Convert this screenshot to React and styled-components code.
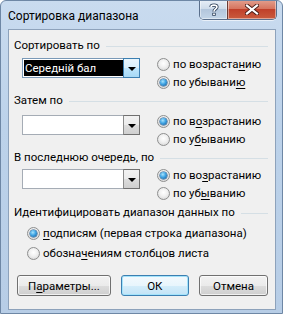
import styled, { createGlobalStyle } from "styled-components";

const GlobalStyle = createGlobalStyle`
  html, body {
    margin: 0;
    padding: 0;
    background: #fff;
  }
  * {
    box-sizing: border-box;
  }
`;

const Window = styled.div`
  width: 283px;
  height: 314px;
  display: flex;
  flex-direction: column;
  background: linear-gradient(180deg, #c9dbef 0%, #bcd2ea 40%, #b7cde6 100%);
  border: 1px solid #6e87a5;
  border-radius: 6px 6px 0 0;
  font-family: Roboto, "Noto Sans", sans-serif;
  font-size: 11.5px;
  color: #000;
  overflow: hidden;
`;

const TitleBar = styled.div`
  height: 28px;
  display: flex;
  align-items: flex-start;
  flex-shrink: 0;
`;

const Title = styled.div`
  padding: 7px 0 0 7px;
  line-height: 16px;
  font-size: 12px;
  color: #000;
`;

const CaptionButtons = styled.div`
  margin-left: auto;
  margin-right: 5px;
  margin-top: -1px;
  display: flex;
  border: 1px solid #5a6f8c;
  border-top: none;
  border-radius: 0 0 5px 5px;
  overflow: hidden;
  box-shadow: 0 1px 0 rgba(255, 255, 255, 0.6);
`;

const CaptionButton = styled.div`
  width: ${({ wide }) => (wide ? "49px" : "27px")};
  height: 19px;
  display: flex;
  align-items: center;
  justify-content: center;
  border-left: ${({ wide }) => (wide ? "1px solid #6b3a33" : "none")};
  background: ${({ wide }) =>
    wide
      ? "linear-gradient(180deg, #e3a08f 0%, #d7755f 45%, #c0402a 50%, #c95b3e 100%)"
      : "linear-gradient(180deg, #e8eff7 0%, #cfdcea 45%, #b3c6dc 50%, #c3d5e8 100%)"};
  box-shadow: inset 0 0 0 1px rgba(255, 255, 255, 0.45);
`;

const Client = styled.div`
  flex: 1;
  margin: 0 6px 3px 7px;
  background: #f0f0f0;
  border: 1px solid #8da2bb;
  padding: 8px 7px 0 5px;
  display: flex;
  flex-direction: column;
`;

const GroupLabel = styled.div`
  display: flex;
  align-items: center;
  gap: 6px;
  height: 15px;
  line-height: 15px;
  white-space: nowrap;

  &::after {
    content: "";
    flex: 1;
    height: 1px;
    margin-top: 1px;
    background: #d5dfe5;
  }
`;

const SortRow = styled.div`
  display: flex;
  align-items: flex-start;
  margin-top: ${({ gap }) => gap}px;
  margin-bottom: ${({ after }) => after}px;
  padding-left: 8px;
`;

const Combo = styled.div`
  width: 118px;
  height: 20px;
  margin-top: 3px;
  border: 1px solid ${({ active }) => (active ? "#7a99b7" : "#a5acb5")};
  background: #fff;
  display: flex;
  padding: 1px;
`;

const ComboValue = styled.div`
  flex: 1;
  background: ${({ selected }) => (selected ? "#000" : "#fff")};
  color: #fff;
  line-height: 16px;
  padding-left: 1px;
  white-space: nowrap;
`;

const ComboArrow = styled.div`
  width: 17px;
  display: flex;
  align-items: center;
  justify-content: center;
  border: 1px solid ${({ active }) => (active ? "#3c7fb1" : "#707070")};
  border-left-color: ${({ active }) => (active ? "#3c7fb1" : "#8c8c8c")};
  background: ${({ active }) =>
    active
      ? "linear-gradient(180deg, #eaf6fd 0%, #d9f0fc 50%, #bee6fd 51%, #a7d9f5 100%)"
      : "linear-gradient(180deg, #f2f2f2 0%, #ebebeb 50%, #dddddd 51%, #cfcfcf 100%)"};
  margin: -2px -2px -2px 0;

  &::before {
    content: "";
    border-left: 4px solid transparent;
    border-right: 4px solid transparent;
    border-top: 4px solid #000;
    margin-top: 1px;
  }
`;

const RadioList = styled.div`
  display: flex;
  flex-direction: column;
  margin-left: ${({ indent }) => indent}px;
`;

const RadioItem = styled.div`
  display: flex;
  align-items: center;
  gap: 3px;
  height: ${({ h }) => h || 18}px;
  white-space: nowrap;
`;

const RadioDot = styled.span`
  width: 13px;
  height: 13px;
  border-radius: 50%;
  border: 1px solid #8e8f8f;
  background: radial-gradient(circle at 50% 40%, #ffffff 0%, #f0f0f0 45%, #cfcfcf 100%);
  display: flex;
  align-items: center;
  justify-content: center;
  flex-shrink: 0;

  &::after {
    content: "";
    display: ${({ checked }) => (checked ? "block" : "none")};
    width: 7px;
    height: 7px;
    border-radius: 50%;
    background: radial-gradient(circle at 40% 35%, #a9e4fd 0%, #3fa4e4 45%, #14538f 100%);
    box-shadow: 0 0 0 0.5px #1b4f7f;
  }
`;

const Key = styled.span`
  text-decoration: underline;
  text-underline-offset: 2px;
`;

const Buttons = styled.div`
  display: flex;
  gap: 10px;
  margin-top: 12px;
  padding-left: 3px;
`;

const Button = styled.div`
  width: ${({ w }) => w}px;
  height: 21px;
  border: 1px solid ${({ primary }) => (primary ? "#3c7fb1" : "#707070")};
  border-radius: 3px;
  display: flex;
  align-items: center;
  justify-content: center;
  line-height: 16px;
  background: ${({ primary }) =>
    primary
      ? "linear-gradient(180deg, #f3f9fd 0%, #e8f5fc 50%, #d4edfa 51%, #c2e3f6 100%)"
      : "linear-gradient(180deg, #f2f2f2 0%, #ebebeb 50%, #dddddd 51%, #cfcfcf 100%)"};
  box-shadow: inset 0 0 0 1px ${({ primary }) => (primary ? "#a3e3fb" : "rgba(255,255,255,0.7)")};
`;

const Help = () => (
  <svg width="10" height="13" viewBox="0 0 10 13">
    <path
      d="M2 4 C2 1.5 8 1.5 8 4 C8 6 5 6 5 8.5"
      fill="none"
      stroke="#2c3e57"
      strokeWidth="3.2"
    />
    <path
      d="M2 4 C2 1.5 8 1.5 8 4 C8 6 5 6 5 8.5"
      fill="none"
      stroke="#fff"
      strokeWidth="1.6"
    />
    <rect x="3.3" y="9.8" width="3.4" height="3" fill="#2c3e57" />
    <rect x="4.1" y="10.5" width="1.8" height="1.6" fill="#fff" />
  </svg>
);

const Close = () => (
  <svg width="14" height="11" viewBox="0 0 14 11">
    <path d="M2 1.5 L12 9.5 M12 1.5 L2 9.5" stroke="#4a1d17" strokeWidth="4" strokeLinecap="square" />
    <path d="M2 1.5 L12 9.5 M12 1.5 L2 9.5" stroke="#fff" strokeWidth="2.2" strokeLinecap="square" />
  </svg>
);

const Radio = ({ checked, h, children }) => (
  <RadioItem h={h}>
    <RadioDot checked={checked} />
    <span>{children}</span>
  </RadioItem>
);

const App = () => (
  <>
    <GlobalStyle />
    <Window>
      <TitleBar>
        <Title>Сортировка диапазона</Title>
        <CaptionButtons>
          <CaptionButton>
            <Help />
          </CaptionButton>
          <CaptionButton wide>
            <Close />
          </CaptionButton>
        </CaptionButtons>
      </TitleBar>
      <Client>
        <GroupLabel>Сортировать по</GroupLabel>
        <SortRow gap={2} after={2}>
          <Combo active>
            <ComboValue selected>Середній бал</ComboValue>
            <ComboArrow active />
          </Combo>
          <RadioList indent={17}>
            <Radio>
              по возраста<Key>н</Key>ию
            </Radio>
            <Radio checked>
              по убывани<Key>ю</Key>
            </Radio>
          </RadioList>
        </SortRow>

        <GroupLabel>Затем по</GroupLabel>
        <SortRow gap={4} after={2}>
          <Combo>
            <ComboValue />
            <ComboArrow />
          </Combo>
          <RadioList indent={17}>
            <Radio checked>
              по в<Key>о</Key>зрастанию
            </Radio>
            <Radio>
              по у<Key>б</Key>ыванию
            </Radio>
          </RadioList>
        </SortRow>

        <GroupLabel>В последнюю очередь, по</GroupLabel>
        <SortRow gap={1} after={3}>
          <Combo>
            <ComboValue />
            <ComboArrow />
          </Combo>
          <RadioList indent={17}>
            <Radio checked>
              по во<Key>з</Key>растанию
            </Radio>
            <Radio>
              по уб<Key>ы</Key>ванию
            </Radio>
          </RadioList>
        </SortRow>

        <GroupLabel>Идентифицировать диапазон данных по</GroupLabel>
        <RadioList indent={13} style={{ marginTop: 3 }}>
          <Radio checked h={20}>
            <Key>п</Key>одписям (первая строка диапазона)
          </Radio>
          <Radio h={20}>
            обозна<Key>ч</Key>ениям столбцов листа
          </Radio>
        </RadioList>

        <Buttons>
          <Button w={95}>
            П<Key>а</Key>раметры...
          </Button>
          <Button w={69} primary>
            ОК
          </Button>
          <Button w={70}>Отмена</Button>
        </Buttons>
      </Client>
    </Window>
  </>
);

export default App;
